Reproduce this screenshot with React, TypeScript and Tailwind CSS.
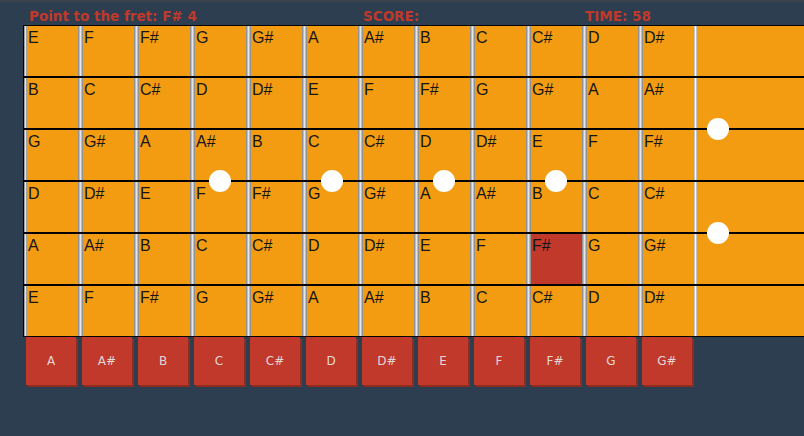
import React from "react";

const chromatic = ["A", "A#", "B", "C", "C#", "D", "D#", "E", "F", "F#", "G", "G#"];
const openStrings = ["E", "B", "G", "D", "A", "E"];

const stringNotes = (open: string) => {
  const start = chromatic.indexOf(open);
  return Array.from({ length: 12 }, (_, i) => chromatic[(start + i) % 12]);
};

// target cell: A string, 9th fret
const target = { row: 4, col: 9 };

const dots = [
  { left: 185, top: 144 },
  { left: 297, top: 144 },
  { left: 409, top: 144 },
  { left: 521, top: 144 },
  { left: 683, top: 92 },
  { left: 683, top: 196 },
];

const App = () => {
  return (
    <div className="min-h-[436px] w-[804px] bg-[#2c3e50] overflow-hidden">
      <div className="h-[2px] bg-[#3c4249]" />
      <div className="flex h-[23px] pl-[29px] pt-[5px] leading-[18px] text-[13.5px] font-bold text-[#c0392b] font-['DejaVu_Sans',sans-serif]">
        <span className="w-[334px]">Point to the fret: F# 4</span>
        <span className="w-[222px]">SCORE:</span>
        <span>TIME: 58</span>
      </div>

      <div className="relative ml-[23px] border-l border-t border-b border-black overflow-hidden font-['Liberation_Sans',sans-serif] text-[16px] leading-[18px] text-[#151515]">
        {openStrings.map((open, r) => (
          <div key={r} className={`flex h-[50px] bg-[#f39c12] ${r < 5 ? "box-content border-b-2 border-black" : ""}`}>
            {stringNotes(open).map((note, c) => (
              <div key={c} className="flex h-full shrink-0">
                <div
                  className={`h-full ${c === 0 ? "w-[3px]" : "w-[5px]"} bg-[linear-gradient(to_right,#7d7d7d,#e6e6e6,#7d7d7d)]`}
                />
                <div
                  className={`h-full w-[51px] pl-[1px] pt-[3px] ${
                    r === target.row && c === target.col ? "bg-[#c0392b]" : ""
                  }`}
                >
                  {note}
                </div>
              </div>
            ))}
            <div className="h-full w-[3px] shrink-0 bg-[linear-gradient(to_right,#a9a9a9,#fafafa,#a9a9a9)]" />
            <div className="h-full flex-1" />
          </div>
        ))}
        {dots.map((d, i) => (
          <div
            key={i}
            className="absolute h-[22px] w-[22px] rounded-full bg-white"
            style={{ left: d.left, top: d.top }}
          />
        ))}
      </div>

      <div className="flex gap-[6px] pl-[26px] font-['DejaVu_Sans',sans-serif] text-[12px]">
        {chromatic.map(n => (
          <button
            key={n}
            className="flex h-[48px] w-[50px] items-center justify-center bg-[#c0392b] text-[#e3d6d6] shadow-[2px_2px_0_#8f2b21]"
          >
            {n}
          </button>
        ))}
      </div>
    </div>
  );
};

export default App;
